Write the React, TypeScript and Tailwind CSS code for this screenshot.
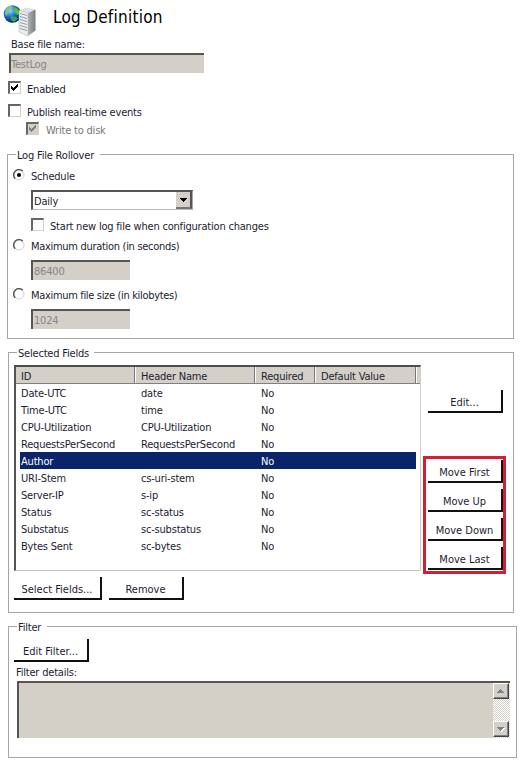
import type { ReactNode } from "react";

function Checkbox({ checked = false, disabled = false }: { checked?: boolean; disabled?: boolean }) {
  return (
    <span className={`flex h-[13px] w-[13px] shrink-0 border-t-2 border-l-2 border-r border-b border-t-[#666] border-l-[#666] border-r-[#d4d0c8] border-b-[#d4d0c8] ${disabled ? "bg-[#d4d0c8]" : "bg-white"}`}>
      {checked && (
        <svg viewBox="0 0 10 10" className="h-[10px] w-[10px]" shapeRendering="crispEdges">
          <path d="M1 3h1v1h1v1h1v-1h1v-1h1v-1h1v-1h1v3h-1v1h-1v1h-1v1h-1v1h-1v-1h-1v-1h-1z" fill={disabled ? "#808080" : "#000"} />
        </svg>
      )}
    </span>
  );
}

function Radio({ checked = false }: { checked?: boolean }) {
  return (
    <svg viewBox="0 0 12 12" className="h-3 w-3 shrink-0">
      <circle cx="6" cy="6" r="5" fill="#fff" stroke="#d4d0c8" strokeWidth="1" />
      <path d="M2.2 9.8A5.2 5.2 0 0 1 9.8 2.2" fill="none" stroke="#555" strokeWidth="1.4" />
      {checked && <circle cx="6" cy="6" r="2" fill="#000" />}
    </svg>
  );
}

function Field({ value, className }: { value: string; className: string }) {
  return (
    <div className={`flex h-5 items-center border-t-2 border-l-2 border-t-[#555] border-l-[#555] bg-[#d4d0c8] pt-px text-[#858585] ${className}`}>
      {value}
    </div>
  );
}

function Button({ children, className = "w-[75px]" }: { children: ReactNode; className?: string }) {
  return (
    <button className={`flex h-[23px] shrink-0 items-center justify-center border-r-2 border-b-2 border-[#111] bg-white pt-[5px] tracking-[0px] whitespace-nowrap ${className}`}>
      {children}
    </button>
  );
}

function Group({ title, children, className, legend }: { title: string; children: ReactNode; className: string; legend: string }) {
  return (
    <fieldset className={`border border-[#a5a5a5] ${className}`}>
      <legend className={`ml-2 h-[13px] pl-px leading-[15px] whitespace-nowrap ${legend}`}>{title}</legend>
      {children}
    </fieldset>
  );
}

const rows = [
  ["Date-UTC", "date"],
  ["Time-UTC", "time"],
  ["CPU-Utilization", "CPU-Utilization"],
  ["RequestsPerSecond", "RequestsPerSecond"],
  ["Author", ""],
  ["URI-Stem", "cs-uri-stem"],
  ["Server-IP", "s-ip"],
  ["Status", "sc-status"],
  ["Substatus", "sc-substatus"],
  ["Bytes Sent", "sc-bytes"],
];

function ServerGlobe() {
  return (
    <svg viewBox="0 0 36 36" className="h-9 w-9">
      <defs>
        <radialGradient id="globe" cx="35%" cy="30%" r="70%">
          <stop offset="0" stopColor="#a5dcf8" />
          <stop offset=".45" stopColor="#287bd2" />
          <stop offset="1" stopColor="#06207a" />
        </radialGradient>
        <linearGradient id="side">
          <stop offset="0" stopColor="#b0b3b5" />
          <stop offset="1" stopColor="#777d80" />
        </linearGradient>
      </defs>
      <circle cx="9.5" cy="11" r="8.8" fill="url(#globe)" />
      <path d="M3 6l4-3 3 1-2 3-3 2-1 4-2-2z" fill="#7cc79a" />
      <path d="M11 4l4 2 2 4-3 2-3-3z" fill="#55bd3c" />
      <path d="M8 13l5 1 2 2-4 3-3-2z" fill="#39a84b" />
      <path d="M16 7.5l7-3 9.500 2-6.500 3.500z" fill="#dfe1e2" />
      <path d="M16 7.500l9 2.500v23l-9-4z" fill="#eceeef" stroke="#a4aaad" strokeWidth=".5" />
      <path d="M25 10l7.500-3.500v21l-7.500 5.500z" fill="url(#side)" />
      <path d="M17 10.500l7 2m-7 1l7 2m-7 1l7 2m-7 1l7 2m-7 1l7 2m-7 1l7 2" stroke="#8b9195" strokeWidth=".9" />
    </svg>
  );
}

export default function App() {
  return (
    <main className="flex h-[772px] w-[527px] flex-col overflow-hidden bg-white font-['DejaVu_Sans_Condensed','DejaVu_Sans',sans-serif] text-[11px] leading-[14px] tracking-[-0.2px] text-[#1c1c30] [font-stretch:condensed]">
      <header className="flex h-[37px] shrink-0 pt-[3px] pl-[3px]">
        <ServerGlobe />
        <h1 className="ml-[14px] pt-[2px] text-[17px] leading-6 tracking-[0.25px] text-black">Log Definition</h1>
      </header>
      <div className="h-4 shrink-0 pt-px pl-[11px]">Base file name:</div>
      <Field value="TestLog" className="ml-[9px] w-[195px] shrink-0" />
      <label className="mt-2 ml-2 flex h-[13px] shrink-0 gap-[6px]"><Checkbox checked /><span className="pt-[2px]">Enabled</span></label>
      <label className="mt-[10px] ml-2 flex h-[13px] shrink-0 gap-[6px]"><Checkbox /><span className="pt-[2px]">Publish real-time events</span></label>
      <label className="mt-[5px] ml-[26px] flex h-[13px] shrink-0 gap-[7px] text-[#777]"><Checkbox checked disabled /><span className="pt-[2px]">Write to disk</span></label>

      <Group title="Log File Rollover" legend="w-[84px]" className="mt-[13px] ml-[7px] h-[191px] w-[507px] shrink-0">
        <div className="flex flex-col">
          <label className="mt-2 ml-[5px] flex h-3 gap-[6px]"><Radio checked /><span className="pt-px">Schedule</span></label>
          <div className="mt-[9px] ml-[23px] flex h-5 w-[162px] border-t-2 border-r border-b border-l-2 border-t-[#555] border-r-[#aaa] border-b-[#bbb] border-l-[#555]">
            <span className="flex-1 pt-[3px] pl-px">Daily</span>
            <span className="flex h-[17px] w-4 items-center justify-center border-r-2 border-b-2 border-r-[#555] border-b-[#777] bg-[#d4d0c8]">
              <svg viewBox="0 0 7 4" className="h-1 w-[7px]" shapeRendering="crispEdges"><path d="M0 0h7L3.5 4z" fill="#000" /></svg>
            </span>
          </div>
          <label className="mt-2 ml-[23px] flex h-[13px] gap-[6px]"><Checkbox /><span className="pt-[2px]">Start new log file when configuration changes</span></label>
          <label className="mt-2 ml-[5px] flex h-3 gap-[6px]"><Radio /><span className="pt-px tracking-[-0.3px]">Maximum duration (in seconds)</span></label>
          <Field value="86400" className="mt-[9px] ml-[23px] w-[99px] pl-px" />
          <label className="mt-2 ml-[5px] flex h-3 gap-[6px]"><Radio /><span className="pt-px tracking-[-0.33px]">Maximum file size (in kilobytes)</span></label>
          <Field value="1024" className="mt-[9px] ml-[23px] w-[99px] pl-px" />
        </div>
      </Group>

      <Group title="Selected Fields" legend="w-[77px]" className="mt-[7px] ml-2 h-[267px] w-[506px] shrink-0">
        <div className="flex pt-[6px] pl-[5px]">
          <div>
            <div className="h-[206px] w-[407px] border-t-2 border-r border-b border-l-2 border-t-[#4a4f4f] border-r-[#d4d0c8] border-b-[#c4c4c0] border-l-[#555]">
              <div className="flex h-[17px] border-b border-[#808080] bg-[#d4d0c8] leading-[19px]">
                <span className="w-[119px] border-r border-[#777] pl-[5px]">ID</span>
                <span className="w-[120px] border-r border-l border-r-[#777] border-l-white pl-[5px]">Header Name</span>
                <span className="w-[60px] border-r border-l border-r-[#777] border-l-white pl-[5px]">Required</span>
                <span className="w-[101px] border-r border-l border-r-[#777] border-l-white pl-[5px]">Default Value</span>
                <span className="flex-1 border-l border-white" />
              </div>
              {rows.map(([id, header]) => (
                <div key={id} className={`ml-1 grid h-[17px] w-[396px] grid-cols-[120px_120px_1fr] pl-px leading-[20px] ${id === "Author" ? "bg-[#0a246a] text-white" : ""}`}>
                  <span>{id}</span><span>{header}</span><span>No</span>
                </div>
              ))}
            </div>
            <div className="mt-[6px] flex gap-[7px]">
              <Button className="w-[88px]">Select Fields...</Button>
              <Button>Remove</Button>
            </div>
          </div>
          <div className="ml-[2px] w-[83px] pt-[25px]">
            <Button className="ml-[5px] w-[75px]">Edit...</Button>
            <div className="mt-[43px] flex h-[118px] flex-col gap-[6px] border-[3px] border-[#d51f30] pt-px pl-[2px]">
              <Button>Move First</Button>
              <Button>Move Up</Button>
              <Button>Move Down</Button>
              <Button>Move Last</Button>
            </div>
          </div>
        </div>
      </Group>

      <Group title="Filter" legend="w-[30px]" className="mt-[7px] ml-2 h-[138px] w-[509px] shrink-0">
        <div className="flex flex-col pt-[6px]">
          <Button className="ml-[5px] w-[75px]">Edit Filter...</Button>
          <div className="mt-[3px] ml-[7px] h-4 pt-px">Filter details:</div>
          <div className="ml-2 flex h-[57px] w-[493px] justify-end border-t-2 border-l-2 border-t-[#555] border-l-[#555] bg-[#d4d0c8]">
            <div className="flex w-[17px] flex-col justify-between bg-[#eceae6] bg-[repeating-conic-gradient(#fff_0_25%,#d4d0c8_0_50%)] bg-[length:2px_2px] pr-px pb-px">
              {[true, false].map((up) => (
                <span key={String(up)} className="flex h-4 w-4 items-center justify-center border border-t-white border-r-[#444] border-b-[#444] border-l-white bg-[#d4d0c8] shadow-[inset_-1px_-1px_0_#808080]">
                  <svg viewBox="0 0 8 5" className="h-[5px] w-2" shapeRendering="crispEdges">
                    <path d={up ? "M0 4L3.5 0 7 4z" : "M1 1h7L4.5 5z"} fill={up ? "#808080" : "#fff"} />
                    {!up && <path d="M0 0h7L3.5 4z" fill="#808080" />}
                  </svg>
                </span>
              ))}
            </div>
          </div>
        </div>
      </Group>
    </main>
  );
}
